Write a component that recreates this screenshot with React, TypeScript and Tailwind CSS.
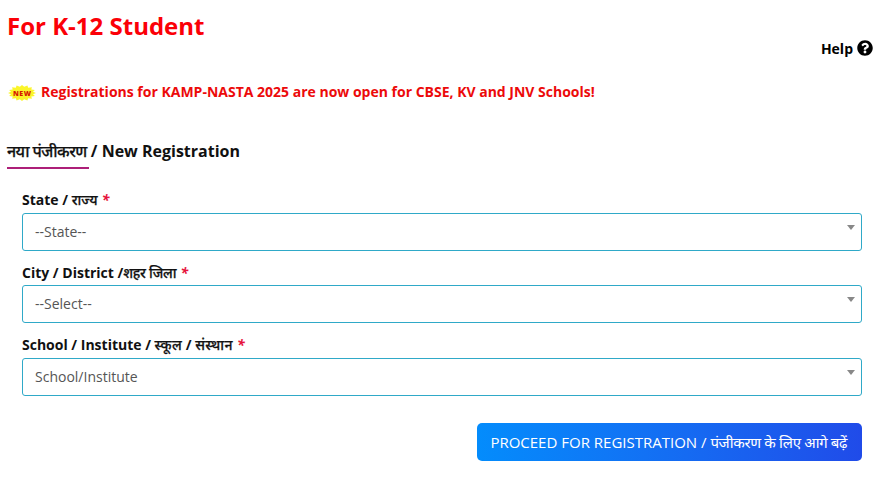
import { FaQuestionCircle } from "react-icons/fa";

interface Field {
  label: string;
  hindi: string[];
  placeholder: string;
  labelClass: string;
}

const fields: Field[] = [
  { label: "State / ", hindi: ["राज्य"], placeholder: "--State--", labelClass: "leading-[19px]" },
  {
    label: "City / District /",
    hindi: ["शहर जिला"],
    placeholder: "--Select--",
    labelClass: "leading-[21px] [&_.hindi]:tracking-[-0.3px]",
  },
  {
    label: "School / Institute / ",
    hindi: ["स्कूल", "संस्थान"],
    placeholder: "School/Institute",
    labelClass: "leading-[19px] [&_.hindi]:tracking-[0.4px]",
  },
];

function NewBadge() {
  // yellow starburst with the word NEW on it
  const points = Array.from({ length: 32 }, (_, i) => {
    const r = i % 2 ? 0.8 : 1;
    const a = (i * Math.PI) / 16;
    return `${(14 + Math.cos(a) * 14 * r).toFixed(1)},${(8 + Math.sin(a) * 8 * r).toFixed(1)}`;
  }).join(" ");

  return (
    <svg width="28" height="16" viewBox="0 0 28 16" className="mt-[4px] shrink-0">
      <polygon points={points} fill="#fbf52a" />
      <text
        x="5"
        y="10.5"
        textLength="18"
        className="fill-[#d51b00] font-['Open_Sans',sans-serif] text-[7px] font-extrabold"
      >
        NEW
      </text>
    </svg>
  );
}

function SelectField({ label, hindi, placeholder, labelClass }: Field) {
  return (
    <div className="h-[72.4px]">
      <label className={`block h-[23px] text-[14px] font-bold whitespace-pre text-[#111] ${labelClass}`}>
        {label}
        {hindi.map((word, i) => (
          <span key={word}>
            {i > 0 && " / "}
            <span className="hindi font-medium [-webkit-text-stroke:0.25px_#111]">{word}</span>
          </span>
        ))}{" "}
        <span className="ml-[0.6px] font-bold text-[#e6143c] italic">*</span>
      </label>
      <button
        type="button"
        className="flex h-[38px] w-full justify-between rounded-[3px] border border-[#2fa9c8] bg-white pr-[6px] pl-3 text-left text-[14px] leading-[36px] text-[#555]"
      >
        <span>{placeholder}</span>
        <span className="mt-[11px] border-x-4 border-t-5 border-x-transparent border-t-[#888]" />
      </button>
    </div>
  );
}

export default function App() {
  return (
    <main className="h-[489px] w-[896px] overflow-hidden bg-white pt-[8px] pl-[7px] font-['Open_Sans','Noto_Sans',sans-serif]">
      <h1 className="h-[29px] text-[24px] leading-[36px] font-bold text-[#fb0007]">For K-12 Student</h1>

      <div className="flex h-[22px] items-center justify-end gap-[4px] pr-[23px] text-[14px] font-bold text-black">
        <span>Help</span>
        <FaQuestionCircle size={16} className="mb-px" />
      </div>

      <div className="mt-[21px] flex h-[22px] items-center gap-[5px] pl-px text-[14px] font-bold whitespace-nowrap text-[#ec0a0a]">
        <NewBadge />
        <span>Registrations for KAMP-NASTA 2025 are now open for CBSE, KV and JNV Schools!</span>
      </div>

      <h2 className="mt-[37px] h-[28px] text-[16px] leading-[24px] font-bold whitespace-nowrap text-[#111]">
        <span className="font-medium tracking-[-0.55px] [-webkit-text-stroke:0.25px_#111]">नया पंजीकरण</span> / New Registration
      </h2>
      <div className="h-[2px] w-[82px] bg-[#ad1f78]" />

      <form className="mt-[21px] ml-[15px] w-[840px]">
        {fields.map((field) => (
          <SelectField key={field.label} {...field} />
        ))}
        <div className="mt-[16px] flex justify-end">
          <button
            type="button"
            className="h-[38px] w-[385px] rounded-[5px] bg-linear-to-r from-[#048cfc] to-[#204be9] pt-px pr-[1.5px] text-[15px] whitespace-nowrap text-white"
          >
            PROCEED FOR REGISTRATION / <span className="tracking-[-0.35px]">पंजीकरण के लिए आगे बढ़ें</span>
          </button>
        </div>
      </form>
    </main>
  );
}
